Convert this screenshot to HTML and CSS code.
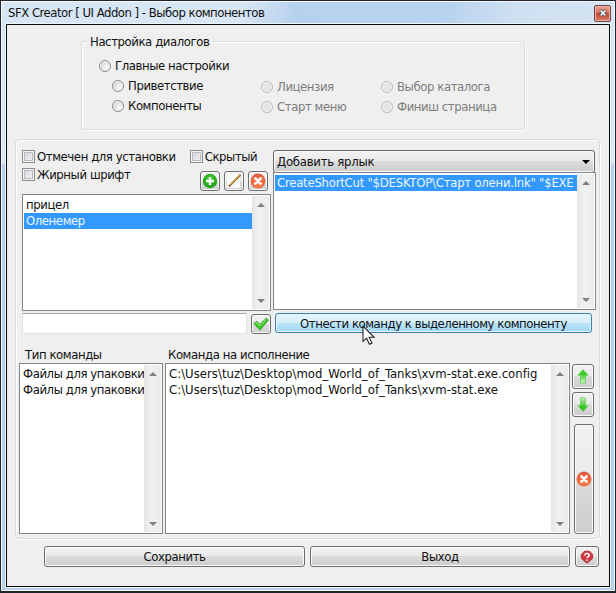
FILE: index.html
```html
<!DOCTYPE html>
<html lang="ru">
<head>
<meta charset="utf-8">
<title>SFX Creator</title>
<link rel="stylesheet" href="styles.css">
</head>
<body>
<svg class="defs" width="0" height="0">
  <defs>
    <radialGradient id="green" cx=".5" cy=".4" r=".6"><stop offset="0" stop-color="#4fd23c"/><stop offset="1" stop-color="#1a9c14"/></radialGradient>
    <radialGradient id="red" cx=".5" cy=".8" r=".8"><stop offset="0" stop-color="#ff7a48"/><stop offset="1" stop-color="#e25a3c"/></radialGradient>
    <linearGradient id="arrow-up" x1="0" y1="0" x2="0" y2="1"><stop offset=".35" stop-color="#3ccb26"/><stop offset="1" stop-color="#d6f7ce"/></linearGradient>
    <linearGradient id="arrow-down" x1="0" y1="0" x2="0" y2="1"><stop offset="0" stop-color="#c4f2ba"/><stop offset=".65" stop-color="#35c520"/></linearGradient>
    <symbol id="cross" viewBox="0 0 16 16"><circle cx="8" cy="8" r="7.4" fill="url(#red)"/><path d="M5.4 5.4l5.2 5.2M10.6 5.4l-5.2 5.2" stroke="#fff" stroke-width="2.7" stroke-linecap="round"/></symbol>
  </defs>
</svg>
<div class="window">
  <header class="titlebar">
    <span class="title">SFX Creator [ UI Addon ] - Выбор компонентов</span>
    <button class="close"><svg width="8" height="8" viewBox="0 0 8 8"><path d="M1.5 1.5l5 5M6.5 1.5l-5 5" stroke="#444a58" stroke-width="3.2"/><path d="M1.7 1.7l4.6 4.6M6.3 1.7l-4.6 4.6" stroke="#fff" stroke-width="1.7"/></svg></button>
  </header>
  <main class="client">
    <section class="dialogs">
      <h2 class="legend">Настройка диалогов</h2>
      <label class="radio main-radio"><i></i><span>Главные настройки</span></label>
      <div class="radio-grid">
        <label class="radio"><i></i><span>Приветствие</span></label>
        <label class="radio off"><i></i><span>Лицензия</span></label>
        <label class="radio off"><i></i><span>Выбор каталога</span></label>
        <label class="radio"><i></i><span>Компоненты</span></label>
        <label class="radio off"><i></i><span>Старт меню</span></label>
        <label class="radio off"><i></i><span>Финиш страница</span></label>
      </div>
    </section>

    <section class="panel">
      <div class="top">
        <div class="left">
          <div class="options">
            <label class="check"><i></i><span>Отмечен для установки</span></label>
            <label class="check"><i></i><span>Скрытый</span></label>
          </div>
          <div class="tools">
            <label class="check bold-check"><i></i><span>Жирный шрифт</span></label>
            <button class="btn tool"><svg width="16" height="16" viewBox="0 0 16 16"><circle cx="8" cy="8" r="7.2" fill="url(#green)"/><path d="M8 4v8M4 8h8" stroke="#fff" stroke-width="2.4"/></svg></button>
            <button class="btn tool"><svg width="16" height="16" viewBox="0 0 16 16"><path d="M1 1h13v14H1z" fill="#fafafa"/><path d="M3 13.4L14.5 1.8" stroke="#6d5530" stroke-width="2"/><path d="M3.8 12.2L14 1.8" stroke="#e9b33f" stroke-width="1.1"/></svg></button>
            <button class="btn tool"><svg width="16" height="16"><use href="#cross"/></svg></button>
          </div>
          <div class="list components">
            <div class="items"><p>прицел</p><p class="selected">Оленемер</p></div>
            <div class="scroll"><b class="up"></b><b class="down"></b></div>
          </div>
          <div class="entry">
            <input class="field" type="text">
            <button class="btn tool"><svg width="16" height="14" viewBox="0 0 16 14"><path d="M.8 6.6L4 4.2l2.6 3.2L13.5 1l1.8 2.2L7 13z" fill="#3dc82a" stroke="#259518" stroke-width=".8"/><path d="M2.2 6.6L4 5.4l2.5 3.4L13.4 2.2" fill="none" stroke="#a0ee90"/></svg></button>
          </div>
        </div>
        <div class="right">
          <div class="combo"><span>Добавить ярлык</span><b></b></div>
          <div class="list shortcuts">
            <div class="items"><p class="selected">CreateShortCut "$DESKTOP\Старт олени.lnk" "$EXE</p></div>
            <div class="scroll"><b class="up"></b><b class="down"></b></div>
          </div>
          <button class="btn assign"><span>Отнести команду к выделенному компоненту</span>
            <svg class="cursor" width="14" height="21" viewBox="0 0 14 21"><path d="M1 1v15.4l3.6-3.2 2.8 6 2.5-1.1-2.7-5.8h4.9z" fill="#fff" stroke="#27272d" stroke-width="1.1"/></svg>
          </button>
        </div>
      </div>
      <div class="captions"><span class="cap-type">Тип команды</span><span>Команда на исполнение</span></div>
      <div class="bottom">
        <div class="list types">
          <div class="items"><p>Файлы для упаковки</p><p>Файлы для упаковки</p></div>
          <div class="scroll"><b class="up"></b><b class="down"></b></div>
        </div>
        <div class="list commands">
          <div class="items"><p>C:\Users\tuz\Desktop\mod_World_of_Tanks\xvm-stat.exe.config</p><p>C:\Users\tuz\Desktop\mod_World_of_Tanks\xvm-stat.exe</p></div>
          <div class="scroll"><b class="up"></b><b class="down"></b></div>
        </div>
        <div class="side">
          <button class="btn move"><svg width="12" height="15" viewBox="0 0 12 15"><path d="M6 .6l5 5.6H8.5v8h-5v-8H1z" fill="url(#arrow-up)" stroke="#58cf48" stroke-width=".7"/></svg></button>
          <button class="btn move"><svg width="12" height="15" viewBox="0 0 12 15"><path d="M6 14.4l5-5.6H8.5v-8h-5v8H1z" fill="url(#arrow-down)" stroke="#58cf48" stroke-width=".7"/></svg></button>
          <button class="btn remove"><svg width="16" height="16"><use href="#cross"/></svg></button>
        </div>
      </div>
    </section>

    <footer class="actions">
      <button class="btn wide"><span>Сохранить</span></button>
      <button class="btn wide exit"><span>Выход</span></button>
      <button class="btn help"><svg width="14" height="14" viewBox="0 0 14 14"><path d="M4 1.6L7 1l3 .6 2.8 3.2-.4 4L7 13.2 1.6 8.8l-.4-4z" fill="#d23a42" stroke="#b02530" stroke-width=".8"/><path d="M4.8 5.4c0-2.8 4.6-2.6 4.4 0C9.1 6.8 7 6.6 7 8.2M7 9.4v1.7" fill="none" stroke="#fff" stroke-width="1.4"/></svg></button>
    </footer>
  </main>
</div>
</body>
</html>
```
FILE: styles.css
```css
* { box-sizing: border-box; }
body {
  margin: 0;
  font: 13px/16px "DejaVu Sans Condensed", "DejaVu Sans", sans-serif;
  font-stretch: condensed;
  letter-spacing: -0.42px;
  color: #111;
  overflow: hidden;
}
h2, p { margin: 0; font: inherit; }
button { font: inherit; letter-spacing: inherit; color: inherit; padding: 0; }
span { white-space: nowrap; }
svg { display: block; flex: none; }
.defs { position: absolute; }

.window {
  width: 616px;
  height: 593px;
  border: 1px solid #22242c;
  border-bottom-width: 2px;
  box-shadow: inset 0 0 0 1px #f6faff;
  background: linear-gradient(#d5e3f3 0, #dce8f5 162px, #b9d1ea 164px, #b9d1ea 100%);
  padding: 1px 5px 4px;
}
.titlebar {
  height: 22px;
  display: flex;
  align-items: center;
  justify-content: space-between;
  margin: 0 -4px;
  padding: 0 3px 0 6px;
  background: linear-gradient(100deg, #d6e4f4 0, #dae7f5 235px, #b8d2ed 290px, #b9d3ee 440px, #cfe0f2 510px, #d6e4f3 100%);
}
.title { letter-spacing: -0.5px; }
.close {
  width: 17px;
  height: 17px;
  display: grid;
  place-items: center;
  border: 1px solid #6b4743;
  border-radius: 2px;
  box-shadow: inset 0 0 0 1px #ebb0a3;
  background: linear-gradient(#e8a394, #d9735c 48%, #c04a32 50%, #dc7f66);
}
.client {
  width: 604px;
  height: 563px;
  border: 1px solid #0c0c0c;
  background: #efefef;
  padding: 16px 9px 0 8px;
  box-shadow: 0 0 0 1px #eaf4fd;
}

.dialogs {
  width: 444px;
  height: 89px;
  margin-left: 66px;
  border: 1px solid #d4dbe1;
  border-radius: 3px;
  box-shadow: inset 1px 1px #fff, 1px 1px #fff;
}
.legend {
  width: 126px;
  height: 16px;
  margin: -8px 0 0 5px;
  padding-left: 3px;
  background: #efefef;
  white-space: nowrap;
}
.radio { display: flex; align-items: center; gap: 4px; height: 20px; }
.radio i {
  width: 12px;
  height: 12px;
  flex: none;
  border: 1px solid #8a8c8e;
  border-radius: 50%;
  box-shadow: inset 0 0 0 1px #f4f4f4;
  background: radial-gradient(circle at 65% 65%, #fbfbfb, #c4c7ca);
}
.main-radio { margin: 6px 0 0 17px; }
.radio-grid { display: grid; grid-template-columns: 149px 120px 140px; margin: 0 0 0 30px; }
.radio.off { color: #7d7d7d; padding-top: 1px; }
.radio.off i { border-color: #bcbcbc; background: #e4e4e4; }

.panel {
  width: 585px;
  height: 400px;
  margin-top: 9px;
  border: 1px solid #d4dbe1;
  border-radius: 4px;
  box-shadow: inset 1px 1px #fff, 1px 1px #fff;
  padding: 9px 3px 0;
}
.top { display: flex; gap: 2px; padding-left: 3px; height: 186px; }
.left { width: 249px; }
.options { display: flex; height: 14px; gap: 14px; }
.check { display: flex; align-items: center; gap: 2px; height: 14px; }
.check span { padding-top: 1px; }
.check i {
  width: 13px;
  height: 13px;
  flex: none;
  border: 1px solid #8b8d90;
  box-shadow: inset 0 0 0 1px #f4f4f4, inset 0 0 0 2px #b8bcc0;
  background: linear-gradient(135deg, #cfd2d5, #f8f8f8);
}
.tools { display: flex; gap: 4px; height: 20px; margin: 8px 0 3px; }
.bold-check { margin-top: -4px; width: 174px; }
.btn {
  display: grid;
  place-items: center;
  border: 1px solid #6e6e6e;
  border-radius: 3px;
  box-shadow: inset 0 0 0 1px #fafafa;
  background: linear-gradient(#f2f2f2, #e9e9e9 49%, #dcdcdc 50%, #cdcdcd);
}
.tool { width: 20px; height: 20px; flex: none; }

.list { display: flex; border: 1px solid #80858c; background: #fff; padding: 1px; }
.items { flex: 1; min-width: 0; overflow: hidden; }
.items p { height: 16px; padding-left: 2px; white-space: pre; overflow: hidden; }
.items .selected { background: #3399ff; color: #e9f6ff; }
.scroll {
  width: 17px;
  flex: none;
  background: linear-gradient(90deg, #e6e6e6, #f0f0f0 40%, #ececec);
  display: flex;
  flex-direction: column;
  justify-content: space-between;
  align-items: center;
  padding: 7px 0 6px;
}
.scroll b { border: 4px solid transparent; }
.scroll .up { border-top: 0; border-bottom-color: #808080; }
.scroll .down { border-bottom: 0; border-top-color: #808080; }
.components { height: 117px; }
.components .items { padding-top: 1px; }
.entry { display: flex; align-items: flex-end; justify-content: space-between; height: 23px; }
.field {
  width: 225px;
  height: 21px;
  border: 1px solid #dde2e7;
  border-top-color: #a8abb2;
  background: #fff;
}

.right { width: 323px; }
.combo {
  width: 322px;
  height: 23px;
  margin-top: 1px;
  display: flex;
  align-items: center;
  justify-content: space-between;
  padding: 1px 4px 0 3px;
  border: 1px solid #666;
  border-radius: 3px;
  box-shadow: inset 0 0 0 1px #fafafa;
  background: linear-gradient(#f2f2f2, #e9e9e9 49%, #dcdcdc 50%, #cdcdcd);
  letter-spacing: -0.25px;
}
.combo b { border: 4px solid transparent; border-top-color: #000; border-bottom: 0; }
.shortcuts { height: 138px; letter-spacing: -0.24px; margin-top: -1px; }
.shortcuts .items { padding-top: 1px; }
.assign {
  position: relative;
  width: 317px;
  height: 20px;
  margin: 3px 0 0 2px;
  border-color: #3c7fb1;
  box-shadow: inset 0 0 0 1px #e6f7ff;
  background: linear-gradient(#e6f5fd, #d5effc 49%, #bae4fb 50%, #a2d8f4);
}
.assign span { letter-spacing: -0.49px; padding-top: 1px; }
.assign span { letter-spacing: -0.45px; }
.cursor { position: absolute; left: 86px; top: 11px; }

.captions { display: flex; height: 28px; align-items: flex-end; padding: 0 0 0 6px; }
.captions span { height: 16px; }
.cap-type { width: 143px; }
.bottom { display: flex; gap: 2px; height: 171px; }
.bottom .items { padding-top: 1px; }
.types { width: 144px; }
.commands { width: 405px; }
.commands .items { letter-spacing: 0.02px; }
.side { display: flex; flex-direction: column; align-items: flex-end; gap: 3px; padding-top: 1px; width: 22px; }
.move { width: 22px; height: 25px; }
.remove { width: 20px; height: 110px; margin-top: 4px; }

.actions { display: flex; gap: 5px; margin: 7px 0 0 29px; }
.wide { width: 261px; height: 21px; }
.exit { width: 260px; }
.help { width: 24px; height: 21px; }
```
